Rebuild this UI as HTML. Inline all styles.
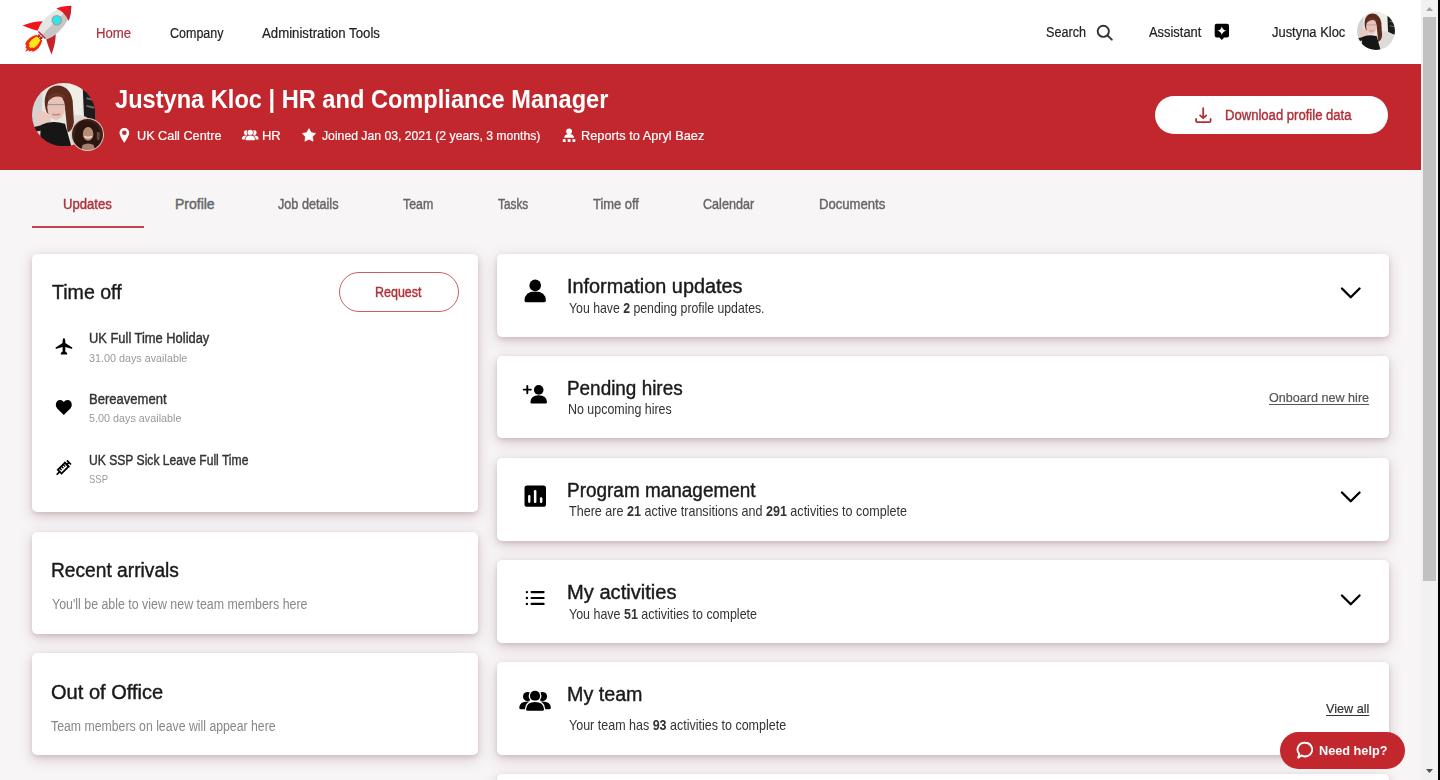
<!DOCTYPE html>
<html><head><meta charset="utf-8">
<style>
*{box-sizing:border-box}
html,body{margin:0;padding:0}
body{width:1440px;height:780px;overflow:hidden;position:relative;background:#F7F5F6;font-family:"Liberation Sans",sans-serif}
.t{position:absolute;white-space:nowrap;line-height:1;transform-origin:0 0;font-family:"Liberation Sans",sans-serif}
.t b{font-weight:700}
.st{-webkit-text-stroke:0.4px currentColor}
.sm{-webkit-text-stroke:0.2px currentColor}
.sb{-webkit-text-stroke:0.4px currentColor}
.ul{text-decoration:underline;text-underline-offset:2px;text-decoration-thickness:1.3px;-webkit-text-stroke:0.2px currentColor}
.abs{position:absolute}
#hdr{left:0;top:0;width:1421px;height:64px;background:#fff}
#ban{left:0;top:64px;width:1421px;height:106px;background:#C1272D}
.card{position:absolute;background:#fff;border-radius:5px;box-shadow:0 4px 14px rgba(125,70,78,.26),0 2px 4px rgba(125,70,78,.17)}
#sb{left:1421px;top:0;width:17px;height:780px;background:#F1F1F1}
#sbk{left:1438px;top:0;width:2px;height:780px;background:#000}
#thumb{left:1423px;top:17px;width:13px;height:564px;background:#C1C1C1}
svg{position:absolute;overflow:visible}
</style></head><body>
<svg width="0" height="0" style="position:absolute">
<defs>
<clipPath id="cc"><circle cx="50" cy="50" r="50"/></clipPath>
<filter id="bl" x="-10%" y="-10%" width="120%" height="120%"><feGaussianBlur stdDeviation="1.0"/></filter>
<symbol id="ph1" viewBox="0 0 100 100">
<g clip-path="url(#cc)"><g filter="url(#bl)">
<rect width="100" height="100" fill="#E9E6DF"/>
<rect x="0" y="0" width="16" height="100" fill="#D0D4D4"/>
<path d="M56 0 L80 0 L78 60 L60 60 Z" fill="#EFEDE6"/>
<path d="M80 10 L100 16 L100 60 L82 54 Z" fill="#1C1A1A"/>
<path d="M86 24 L98 27 M86 36 L98 39" stroke="#6a6a6a" stroke-width="3"/>
<path d="M60 52 Q78 46 96 60 L96 100 L60 100 Z" fill="#DEDAD8"/>
<path d="M20 28 Q22 4 42 4 Q60 6 64 28 L66 62 Q64 76 56 78 L52 40 Q46 18 30 24 L26 50 Q20 44 20 28 Z" fill="#5A2A1E"/>
<ellipse cx="38" cy="38" rx="14" ry="20" fill="#E8C2B8"/>
<path d="M24 22 Q38 10 52 20 L52 25 Q38 16 26 28 Z" fill="#6A3224"/>
<path d="M25 34 H51" stroke="#9A9898" stroke-width="1.8"/>
<path d="M32 49 Q38 51.5 44 49" stroke="#C08080" stroke-width="2.2" fill="none"/>
<path d="M6 46 Q18 40 30 52 L30 66 Q18 70 8 66 Z" fill="#EACAC0"/>
<path d="M14 66 Q30 58 52 64 L62 100 L12 100 Z" fill="#151212"/>
<path d="M0 70 L16 66 L18 74 L0 78 Z" fill="#1a1818"/>
</g></g>
</symbol>
<symbol id="ph2" viewBox="0 0 100 100">
<g clip-path="url(#cc)"><g filter="url(#bl)">
<rect width="100" height="100" fill="#3A2018"/>
<path d="M10 40 Q20 -5 55 8 Q92 15 90 60 L95 100 L5 100 Z" fill="#2A1410"/>
<ellipse cx="52" cy="48" rx="17" ry="22" fill="#B88A78"/>
<path d="M40 56 Q52 64 64 56" stroke="#EEDDD4" stroke-width="5" fill="none"/>
<path d="M34 84 Q52 74 70 84 L74 100 L30 100 Z" fill="#A88070"/>
<path d="M80 40 L90 44 L88 70 L80 66 Z" fill="#6A4A40"/>
</g></g>
</symbol>
</defs>
</svg>

<div id="hdr" class="abs"></div>
<div id="ban" class="abs"></div>

<!-- rocket logo -->
<svg style="left:0;top:0" width="100" height="64" viewBox="0 0 100 64">
<g transform="translate(55,22) rotate(45)">
<path d="M-4 22 Q-8.5 30 -5.5 37 Q-3.5 35.5 -2.5 39.5 Q-1 37 0 42.5 Q1 37 2.5 39.5 Q3.5 35.5 5.5 37 Q8.5 30 4 22 Z" fill="#EE2A10"/>
<path d="M-2.5 23 Q-5 29.5 -3.2 34 Q-1.8 33 -0.8 36.5 Q0 34 0.8 36.5 Q1.8 33 3.2 34 Q5 29.5 2.5 23 Z" fill="#FFE41C"/>
<path d="M-9 8 Q-16 15 -20.5 25.5 Q-12 22 -6 18.5 Z" fill="#F0141C"/>
<path d="M9 8 Q16 15 20.5 25.5 Q12 22 6 18.5 Z" fill="#C4242C"/>
<path d="M0 -23 Q10 -12 9.5 5 Q9 13 6 18.5 L-6 18.5 Q-9 13 -9.5 5 Q-10 -12 0 -23 Z" fill="#E6E6E6"/>
<path d="M0 -23 Q10 -12 9.5 5 Q9 13 6 18.5 L0 18.5 Z" fill="#C6C6C6"/>
<path d="M-5 18.5 H5" stroke="#C4242C" stroke-width="1.4"/>
<path d="M-1.5 19 L-1.5 23 M1.5 19 L1.5 23 M-3 21 H3" stroke="#A0181C" stroke-width="1.1"/>
<path d="M0 -23 Q6 -17 8.6 -10.5 Q0 -14 -8.6 -10.5 Q-6 -17 0 -23 Z" fill="#F0141C"/>
<path d="M0 -23 Q6 -17 8.6 -10.5 Q4 -12.5 0 -13 Z" fill="#C4242C"/>
<circle cx="0" cy="-2.5" r="4.6" fill="#2EE6F4" stroke="#92A890" stroke-width="1.3"/>
</g>
</svg>

<!-- search icon -->
<svg style="left:1095px;top:24px" width="20" height="18" viewBox="0 0 20 18">
<circle cx="8.3" cy="7.3" r="5.6" fill="none" stroke="#333" stroke-width="1.9"/>
<path d="M12.4 11.4 L16.8 15.6" stroke="#333" stroke-width="2" stroke-linecap="round"/>
</svg>
<!-- assistant icon -->
<svg style="left:1214px;top:23px" width="17" height="19" viewBox="0 0 17 19">
<path d="M2.6 0.8 H13 Q15 0.8 15 2.8 V12.6 Q15 14.6 13 14.6 H10.1 L7.8 17 L5.5 14.6 H2.6 Q0.7 14.6 0.7 12.6 V2.8 Q0.7 0.8 2.6 0.8 Z" fill="#000"/>
<path d="M7.85 3.2 Q8.5 7 12.4 7.7 Q8.5 8.4 7.85 12.3 Q7.2 8.4 3.3 7.7 Q7.2 7 7.85 3.2 Z" fill="#fff"/>
</svg>
<!-- header avatar -->
<svg style="left:1357px;top:12px" width="38" height="38" viewBox="0 0 100 100"><use href="#ph1"/></svg>

<!-- banner avatars -->
<svg style="left:32px;top:82.5px" width="63.5" height="63.5" viewBox="0 0 100 100"><use href="#ph1"/></svg>
<div class="abs" style="left:70.5px;top:118px;width:33px;height:33px;border-radius:50%;background:#E8C0C0"></div>
<svg style="left:71.5px;top:119px" width="31" height="31" viewBox="0 0 100 100"><use href="#ph2"/></svg>

<!-- banner meta icons -->
<svg style="left:119px;top:127px" width="12" height="17" viewBox="0 0 12 17">
<path d="M5.35 1 C2.6 1 0.5 3.1 0.5 5.8 C0.5 9.2 5.35 15.9 5.35 15.9 C5.35 15.9 10.2 9.2 10.2 5.8 C10.2 3.1 8.1 1 5.35 1 Z M5.35 3.4 A2.3 2.3 0 1 1 5.35 8 A2.3 2.3 0 1 1 5.35 3.4 Z" fill="#fff" fill-rule="evenodd"/>
</svg>
<svg style="left:238px;top:124.1px" width="24.4" height="21.2" viewBox="0 0 46 40">
<circle cx="15.6" cy="16.6" r="4.6" fill="#fff"/><circle cx="30.5" cy="16.6" r="4.6" fill="#fff"/>
<path d="M7.2 27.8 Q7.6 21.6 15.5 21.6 Q20 21.6 22 24 V29.2 H8.6 Q7.2 29.2 7.2 27.8 Z" fill="#fff"/>
<path d="M38.9 27.8 Q38.5 21.6 30.6 21.6 Q26.1 21.6 24.1 24 V29.2 H37.5 Q38.9 29.2 38.9 27.8 Z" fill="#fff"/>
<circle cx="23.05" cy="15.9" r="5.1" fill="#fff" stroke="#C1272D" stroke-width="3" paint-order="stroke"/>
<path d="M14.1 29.3 Q14.5 21.9 23.05 21.9 Q31.6 21.9 32 29.3 Q32 30.8 30.5 30.8 H15.6 Q14.1 30.8 14.1 29.3 Z" fill="#fff" stroke="#C1272D" stroke-width="3" paint-order="stroke"/>
</svg>
<svg style="left:302px;top:128px" width="14" height="14" viewBox="0 0 14 14">
<path d="M7.00 0.60 L9.17 4.61 L13.66 5.44 L10.52 8.74 L11.11 13.26 L7.00 11.30 L2.89 13.26 L3.48 8.74 L0.34 5.44 L4.83 4.61 Z" fill="#fff" stroke="#fff" stroke-width="0.6" stroke-linejoin="round"/>
</svg>
<svg style="left:556px;top:122px" width="24" height="24" viewBox="0 0 24 24">
<circle cx="13.1" cy="9.3" r="2.9" fill="#fff"/>
<path d="M8.1 15.8 Q8.3 11.9 13.1 11.9 Q17.9 11.9 18.1 15.8 Z" fill="#fff"/>
<rect x="6.8" y="17.1" width="2.8" height="2.9" fill="#fff"/><rect x="11.7" y="17.1" width="2.8" height="2.9" fill="#fff"/><rect x="16.5" y="17.1" width="2.8" height="2.9" fill="#fff"/>
</svg>

<!-- download button -->
<div class="abs" style="left:1155px;top:96px;width:233px;height:38px;border-radius:19px;background:#fff"></div>
<svg style="left:1190px;top:102px" width="28" height="26" viewBox="0 0 28 26">
<path d="M13.2 6.2 V15.2 M10.1 13.4 L13.2 16.2 L16.3 13.4" stroke="#B0303A" stroke-width="1.8" fill="none" stroke-linecap="round" stroke-linejoin="round"/>
<path d="M6.1 17 V18.9 Q6.1 20.1 7.3 20.1 H19.4 Q20.6 20.1 20.6 18.9 V17" stroke="#B0303A" stroke-width="1.8" fill="none" stroke-linecap="round"/>
</svg>

<!-- tabs underline -->
<div class="abs" style="left:32px;top:226px;width:112px;height:2px;background:#C1454C"></div>

<!-- cards left -->
<div class="card" style="left:32px;top:254px;width:446px;height:258px"></div>
<div class="card" style="left:32px;top:532px;width:446px;height:102px"></div>
<div class="card" style="left:32px;top:653px;width:446px;height:102px"></div>
<!-- cards right -->
<div class="card" style="left:497px;top:254px;width:892px;height:83px"></div>
<div class="card" style="left:497px;top:356px;width:892px;height:82px"></div>
<div class="card" style="left:497px;top:458px;width:892px;height:83px"></div>
<div class="card" style="left:497px;top:560px;width:892px;height:83px"></div>
<div class="card" style="left:497px;top:662px;width:892px;height:93px"></div>
<div class="card" style="left:497px;top:774px;width:892px;height:93px"></div>

<!-- request btn -->
<div class="abs" style="left:339px;top:272px;width:120px;height:40px;border-radius:20px;border:1.5px solid #C75F66"></div>

<!-- leave icons -->
<svg style="left:50px;top:330px" width="30" height="30" viewBox="0 0 30 30">
<path d="M13.95 8 Q15.3 8.6 15.3 11 V12.9 L22.2 17.4 V19 L15.3 17.1 V21.4 L17.1 23 V24.6 H10.8 V23 L12.6 21.4 V17.1 L5.7 19 V17.4 L12.6 12.9 V11 Q12.6 8.6 13.95 8 Z" fill="#000"/>
</svg>
<svg style="left:55px;top:399px" width="18" height="17" viewBox="0 0 18 17">
<path d="M8.8 16 L2.2 9.6 Q0.2 7.6 0.9 4.7 Q1.7 1.2 5 1 Q7.3 0.9 8.8 3 Q10.3 0.9 12.6 1 Q15.9 1.2 16.7 4.7 Q17.4 7.6 15.4 9.6 Z" fill="#000"/>
</svg>
<svg style="left:50px;top:453px" width="30" height="30" viewBox="0 0 30 30">
<g transform="translate(13.6,14.8) rotate(-45)" stroke="#000" fill="none">
<path d="M-9.8 0 H-5.5" stroke-width="1.7"/>
<rect x="-5.5" y="-2.6" width="10" height="5.2" stroke-width="1.8"/>
<path d="M-3 -2.6 V0.2 M-0.5 -2.6 V0.2 M2 -2.6 V0.2" stroke-width="1.3"/>
<path d="M4.5 -3.4 V3.4 M4.5 0 H7.6 M7.6 -2.9 V2.9" stroke-width="1.7"/>
</g>
</svg>

<!-- right icons -->
<svg style="left:515px;top:272px" width="40" height="40" viewBox="0 0 40 40">
<circle cx="20.2" cy="13.4" r="5.8" fill="#000"/>
<path d="M9.5 28.6 Q9.8 19.6 20.2 19.6 Q30.6 19.6 30.9 28.6 Q30.9 30.3 29.3 30.3 H11.1 Q9.5 30.3 9.5 28.6 Z" fill="#000"/>
</svg>
<svg style="left:515px;top:375px" width="40" height="40" viewBox="0 0 40 40">
<path d="M12.3 11 V18.2 M8.7 14.6 H15.9" stroke="#000" stroke-width="1.9" stroke-linecap="round"/>
<circle cx="23.7" cy="14.9" r="4.8" fill="#000"/>
<path d="M15.4 27 Q15.8 20.2 23.7 20.2 Q31.6 20.2 32 27 Q32 28.5 30.5 28.5 H16.9 Q15.4 28.5 15.4 27 Z" fill="#000"/>
</svg>
<svg style="left:515px;top:476px" width="40" height="40" viewBox="0 0 40 40">
<rect x="9.5" y="9.5" width="21.5" height="21.3" rx="2.6" fill="#000"/>
<rect x="13.1" y="19" width="2.3" height="7.9" rx="1.15" fill="#fff"/>
<rect x="18.9" y="14.1" width="2.5" height="12.8" rx="1.2" fill="#fff"/>
<rect x="24.9" y="21.3" width="2.5" height="5.6" rx="1.2" fill="#fff"/>
</svg>
<svg style="left:515px;top:578px" width="40" height="40" viewBox="0 0 40 40">
<circle cx="11.9" cy="14.1" r="1.2" fill="#000"/><circle cx="11.9" cy="20" r="1.2" fill="#000"/><circle cx="11.9" cy="25.9" r="1.2" fill="#000"/>
<path d="M16.6 14.1 H28.6 M16.6 20 H28.6 M16.6 25.9 H28.6" stroke="#000" stroke-width="2.2" stroke-linecap="round"/>
</svg>
<svg style="left:512px;top:680px" width="46" height="40" viewBox="0 0 46 40">
<circle cx="15.6" cy="16.6" r="4.6" fill="#000"/><circle cx="30.5" cy="16.6" r="4.6" fill="#000"/>
<path d="M7.2 27.8 Q7.6 21.6 15.5 21.6 Q20 21.6 22 24 V29.2 H8.6 Q7.2 29.2 7.2 27.8 Z" fill="#000"/>
<path d="M38.9 27.8 Q38.5 21.6 30.6 21.6 Q26.1 21.6 24.1 24 V29.2 H37.5 Q38.9 29.2 38.9 27.8 Z" fill="#000"/>
<circle cx="23.05" cy="15.9" r="5.1" fill="#000" stroke="#fff" stroke-width="2.6" paint-order="stroke"/>
<path d="M14.1 29.3 Q14.5 21.9 23.05 21.9 Q31.6 21.9 32 29.3 Q32 30.8 30.5 30.8 H15.6 Q14.1 30.8 14.1 29.3 Z" fill="#000" stroke="#fff" stroke-width="2.6" paint-order="stroke"/>
</svg>

<!-- chevrons -->
<svg style="left:1340px;top:286px" width="22" height="14" viewBox="0 0 22 14"><path d="M1.95 2.45 L10.75 11.3 L19.55 2.45" stroke="#000" stroke-width="2.3" fill="none" stroke-linecap="round" stroke-linejoin="round"/></svg>
<svg style="left:1340px;top:490px" width="22" height="14" viewBox="0 0 22 14"><path d="M1.95 2.45 L10.75 11.3 L19.55 2.45" stroke="#000" stroke-width="2.3" fill="none" stroke-linecap="round" stroke-linejoin="round"/></svg>
<svg style="left:1340px;top:593px" width="22" height="14" viewBox="0 0 22 14"><path d="M1.95 2.45 L10.75 11.3 L19.55 2.45" stroke="#000" stroke-width="2.3" fill="none" stroke-linecap="round" stroke-linejoin="round"/></svg>

<!-- need help -->
<div class="abs" style="left:1280px;top:732px;width:125px;height:37px;border-radius:18.5px;background:#C1272D"></div>
<svg style="left:1296px;top:741px" width="19" height="19" viewBox="0 0 19 19">
<path d="M9.5 1.8 A7 6.8 0 1 1 5.6 14.4 L2.2 16.8 L3.2 12.9 A7 6.8 0 0 1 9.5 1.8 Z" fill="none" stroke="#fff" stroke-width="1.9" stroke-linejoin="round"/>
</svg>

<div class="t sm" style="left:96.01px;top:26.05px;font-size:14px;color:#B0303A;transform:scaleX(0.9404);">Home</div>
<div class="t sm" style="left:170.05px;top:26.05px;font-size:14px;color:#222;transform:scaleX(0.8927);">Company</div>
<div class="t sm" style="left:262.21px;top:26.05px;font-size:14px;color:#222;transform:scaleX(0.9433);">Administration Tools</div>
<div class="t sm" style="left:1045.84px;top:24.75px;font-size:14px;color:#222;transform:scaleX(0.9034);">Search</div>
<div class="t sm" style="left:1149.23px;top:25.35px;font-size:14px;color:#222;transform:scaleX(0.9213);">Assistant</div>
<div class="t sm" style="left:1272.22px;top:24.75px;font-size:14px;color:#222;transform:scaleX(0.9235);">Justyna Kloc</div>
<div class="t" style="left:114.58px;top:86.37px;font-size:26.5px;color:#fff;font-weight:700;transform:scaleX(0.8910);">Justyna Kloc | HR and Compliance Manager</div>
<div class="t sm" style="left:136.84px;top:128.87px;font-size:13.5px;color:#fff;transform:scaleX(0.9383);">UK Call Centre</div>
<div class="t sm" style="left:262.02px;top:128.87px;font-size:13.5px;color:#fff;transform:scaleX(0.9606);">HR</div>
<div class="t sm" style="left:322.47px;top:128.87px;font-size:13.5px;color:#fff;transform:scaleX(0.9039);">Joined Jan 03, 2021 (2 years, 3 months)</div>
<div class="t sm" style="left:581.24px;top:128.87px;font-size:13.5px;color:#fff;transform:scaleX(0.9441);">Reports to Apryl Baez</div>
<div class="t sb" style="left:1225.02px;top:108.35px;font-size:14px;color:#B0303A;transform:scaleX(0.9343);">Download profile data</div>
<div class="t sb" style="left:63.02px;top:196.85px;font-size:14px;color:#B0303A;transform:scaleX(0.9341);">Updates</div>
<div class="t sb" style="left:174.96px;top:196.85px;font-size:14px;color:#666;">Profile</div>
<div class="t sb" style="left:278.24px;top:196.85px;font-size:14px;color:#666;transform:scaleX(0.9039);">Job details</div>
<div class="t sb" style="left:403.26px;top:196.85px;font-size:14px;color:#666;transform:scaleX(0.8840);">Team</div>
<div class="t sb" style="left:498.29px;top:196.85px;font-size:14px;color:#666;transform:scaleX(0.8440);">Tasks</div>
<div class="t sb" style="left:592.62px;top:196.85px;font-size:14px;color:#666;transform:scaleX(0.9228);">Time off</div>
<div class="t sb" style="left:703.44px;top:196.85px;font-size:14px;color:#666;transform:scaleX(0.8995);">Calendar</div>
<div class="t sb" style="left:819.01px;top:196.85px;font-size:14px;color:#666;transform:scaleX(0.9364);">Documents</div>
<div class="t st" style="left:52.23px;top:281.75px;font-size:20.5px;color:#1a1a1a;transform:scaleX(0.9553);">Time off</div>
<div class="t st" style="left:375.25px;top:285.35px;font-size:14px;color:#B0303A;transform:scaleX(0.8910);">Request</div>
<div class="t st" style="left:89.03px;top:331.05px;font-size:14px;color:#333;transform:scaleX(0.9203);">UK Full Time Holiday</div>
<div class="t" style="left:89.15px;top:352.59px;font-size:11px;color:#999;transform:scaleX(0.9799);">31.00 days available</div>
<div class="t st" style="left:89.02px;top:392.15px;font-size:14px;color:#333;transform:scaleX(0.9307);">Bereavement</div>
<div class="t" style="left:89.15px;top:412.99px;font-size:11px;color:#999;transform:scaleX(0.9819);">5.00 days available</div>
<div class="t st" style="left:89.07px;top:452.85px;font-size:14px;color:#333;transform:scaleX(0.8656);">UK SSP Sick Leave Full Time</div>
<div class="t" style="left:89.23px;top:474.49px;font-size:11px;color:#999;transform:scaleX(0.8606);">SSP</div>
<div class="t st" style="left:50.85px;top:560.69px;font-size:19.5px;color:#1a1a1a;transform:scaleX(0.9837);">Recent arrivals</div>
<div class="t" style="left:52.26px;top:596.65px;font-size:14px;color:#888;transform:scaleX(0.8853);">You'll be able to view new team members here</div>
<div class="t st" style="left:51.00px;top:682.89px;font-size:19.5px;color:#1a1a1a;transform:scaleX(1.0284);">Out of Office</div>
<div class="t" style="left:51.46px;top:718.75px;font-size:14px;color:#888;transform:scaleX(0.8774);">Team members on leave will appear here</div>
<div class="t st" style="left:567.31px;top:276.59px;font-size:19.5px;color:#1a1a1a;transform:scaleX(1.0182);">Information updates</div>
<div class="t" style="left:568.76px;top:300.53px;font-size:14.5px;color:#333;transform:scaleX(0.8469);">You have <b>2</b> pending profile updates.</div>
<div class="t st" style="left:567.37px;top:378.59px;font-size:19.5px;color:#1a1a1a;transform:scaleX(0.9694);">Pending hires</div>
<div class="t" style="left:567.75px;top:401.58px;font-size:14.5px;color:#333;transform:scaleX(0.8581);">No upcoming hires</div>
<div class="t ul" style="left:1269.24px;top:390.57px;font-size:13.5px;color:#555;transform:scaleX(0.9325);">Onboard new hire</div>
<div class="t st" style="left:567.36px;top:481.39px;font-size:19.5px;color:#1a1a1a;transform:scaleX(0.9721);">Program management</div>
<div class="t" style="left:568.75px;top:504.13px;font-size:14.5px;color:#333;transform:scaleX(0.8662);">There are <b>21</b> active transitions and <b>291</b> activities to complete</div>
<div class="t st" style="left:567.29px;top:583.49px;font-size:19.5px;color:#1a1a1a;transform:scaleX(1.0314);">My activities</div>
<div class="t" style="left:568.75px;top:606.58px;font-size:14.5px;color:#333;transform:scaleX(0.8593);">You have <b>51</b> activities to complete</div>
<div class="t st" style="left:567.32px;top:685.29px;font-size:19.5px;color:#1a1a1a;transform:scaleX(1.0095);">My team</div>
<div class="t" style="left:568.75px;top:717.63px;font-size:14.5px;color:#333;transform:scaleX(0.8625);">Your team has <b>93</b> activities to complete</div>
<div class="t ul" style="left:1326.24px;top:701.67px;font-size:13.5px;color:#333;transform:scaleX(0.9361);">View all</div>
<div class="t" style="left:1319.04px;top:743.80px;font-size:13px;color:#fff;font-weight:700;transform:scaleX(0.9771);">Need help?</div>

<!-- scrollbar -->
<div id="sb" class="abs"></div>
<div id="sbk" class="abs"></div>
<div id="thumb" class="abs"></div>
<svg style="left:1422px;top:0" width="16" height="16" viewBox="0 0 16 16"><path d="M4 11 L11 11 L7.5 7 Z" fill="#A3A3A3"/></svg>
<svg style="left:1422px;top:764px" width="16" height="16" viewBox="0 0 16 16"><path d="M4 5 L11 5 L7.5 9 Z" fill="#505050"/></svg>
</body></html>
